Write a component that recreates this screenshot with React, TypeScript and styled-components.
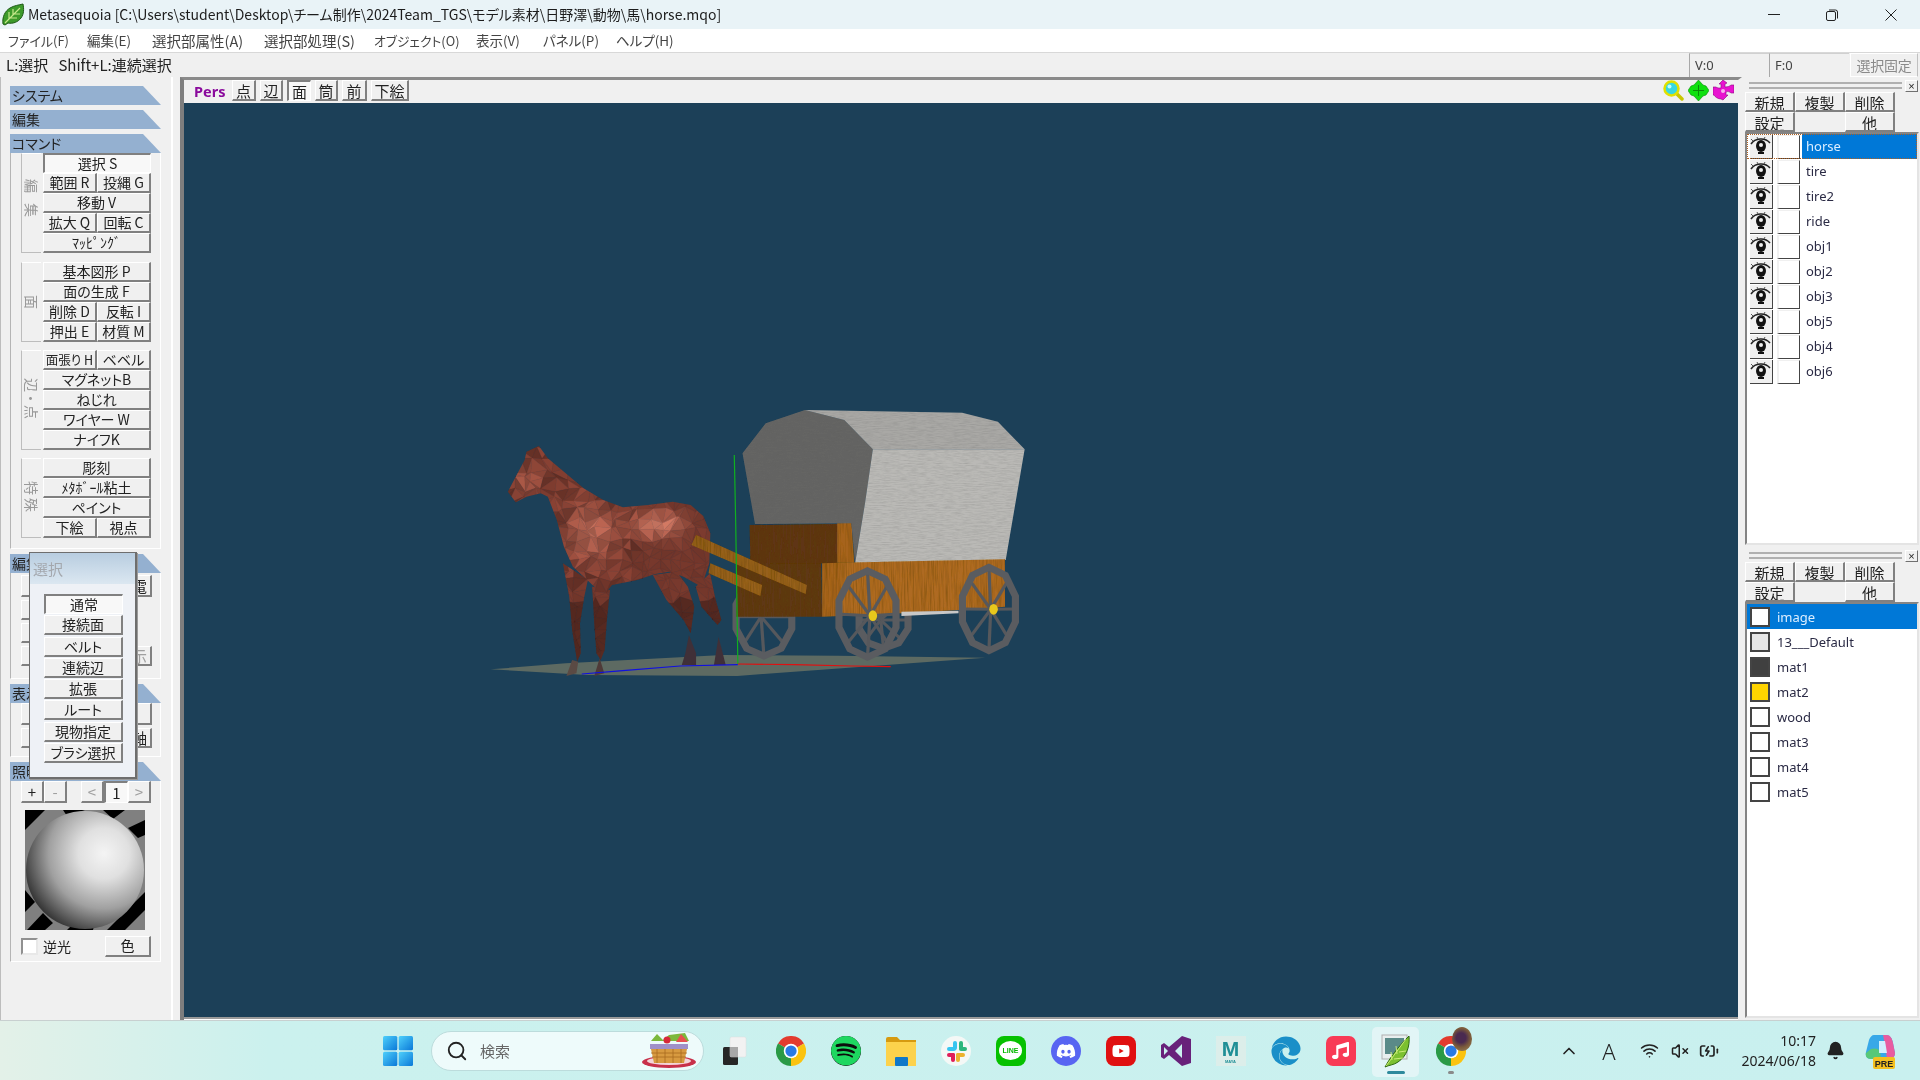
import React from "react";
import styled, { createGlobalStyle } from "styled-components";
import { Search, ChevronUp, Wifi, VolumeX, BatteryCharging, Bell } from "lucide-react";
import { FaSpotify, FaDiscord, FaYoutube, FaMusic, FaEdge } from "react-icons/fa";

const UI = `"Noto Sans CJK JP", "Noto Sans", sans-serif`;

const Global = createGlobalStyle`
  html, body { margin: 0; padding: 0; overflow: hidden; background: #f0f0f0; }
  * { box-sizing: border-box; font-feature-settings: "palt" !important; }
  body { font-family: ${UI}; }
`;

const Screen = styled.div`
  width: 1920px; height: 1080px; display: flex; flex-direction: column; overflow: hidden;
  color: #222; font-size: 14px; filter: blur(0.35px);
`;

/* ---------- title / menu / status ---------- */
const TitleBar = styled.div`
  height: 29px; background: #e9f3f7; display: flex; align-items: center; padding-left: 2px;
  flex: none;
`;
const TitleText = styled.div`
  margin-left: 3px; font: 14px/29px ${UI}; color: #1c1c1c; white-space: nowrap; flex: 1;
`;
const CaptionButton = styled.div`
  width: 58.5px; height: 29px; display: flex; align-items: center; justify-content: center;
`;
const MenuBar = styled.div`
  height: 23px; background: #fff; display: flex; align-items: center; flex: none; padding-left: 8px;
`;
const MenuItem = styled.div<{ $w: number; $fs: number }>`
  width: ${(p) => p.$w}px; font: ${(p) => p.$fs}px/23px ${UI}; color: #444; white-space: nowrap;
`;
const StatusBar = styled.div`
  height: 25px; background: #f0f0f0; border-top: 1px solid #d8d8d8; display: flex; align-items: stretch;
  flex: none; padding-left: 6px;
`;
const StatusHint = styled.div`
  flex: 1; font: 15px/24px ${UI}; color: #222; white-space: pre;
`;
const StatusCell = styled.div`
  width: 80px; margin-right: 0; border-left: 1px solid #a8a8a8; border-top: 1px solid #d0d0d0;
  font: 13px/23px "Noto Sans", sans-serif; color: #444; padding-left: 5px;
`;
const FixButton = styled.div`
  width: 68px; margin: 0 2px 0 1px; border: 1px solid #fff; border-right-color: #c0c0c0;
  font: 14px/23px ${UI}; color: #8a8a8a; text-align: center; white-space: nowrap; letter-spacing: -0.2px;
`;

/* ---------- workspace ---------- */
const Workspace = styled.div`
  height: 943px; flex: none; display: flex; background: #f0f0f0;
`;
const LeftPanel = styled.div`
  width: 180px; flex: none; position: relative; padding: 9px 0 0 9px; border-left: 1px solid #bdbdbd;
  display: flex; flex-direction: column; gap: 5px;
`;
const Sash = styled.div`
  position: absolute; left: 170px; top: 0; bottom: 0; width: 2px; background: #fff;
`;
const SectionHeader = styled.div`
  width: 151px; height: 19px; flex: none; background: #94b0d0; font: 14px/19px ${UI}; color: #222; padding-left: 2px;
  clip-path: polygon(0 0, 133px 0, 100% 100%, 0 100%);
`;
const Section = styled.div`
  display: flex; flex-direction: column;
`;
const SectionFrame = styled.div<{ $h: number }>`
  width: 151px; height: ${(p) => p.$h}px; border-left: 1px solid #b4b4b4; border-right: 1px solid #fff;
  border-bottom: 1px solid #fff; padding-left: 10px; margin-left: 0; display: flex; flex-direction: column;
`;
const CommandGroup = styled.div<{ $mt?: number }>`
  display: flex; margin-top: ${(p) => p.$mt ?? 0}px;
`;
const GroupLabel = styled.div<{ $sp?: number }>`
  width: 20px; margin-right: 2px; border: 1px solid #bdbdbd; border-right: none; border-top-color: #fff;
  writing-mode: vertical-rl; text-orientation: sideways; display: flex; align-items: center; justify-content: center;
  color: #999; font: 14px/18px ${UI}; letter-spacing: ${(p) => p.$sp ?? 0}px;
`;
const ButtonStack = styled.div`
  width: 108px; display: flex; flex-direction: column;
`;
const ButtonRow = styled.div`
  display: flex; height: 20px;
`;
const CmdButton = styled.div<{ $on?: boolean; $tight?: boolean; $dim?: boolean }>`
  flex: 1; min-width: 0; height: 100%; background: ${(p) => (p.$on ? "#f8f8f8" : "#f0f0f0")};
  border: 1px solid #fff; border-right: 2px solid #808080; border-bottom: 2px solid #808080;
  ${(p) => p.$on && "border-color: #808080 #fff #fff #808080; border-width: 2px 1px 1px 2px;"}
  display: flex; align-items: center; justify-content: center; white-space: pre; overflow: hidden;
  font: ${(p) => (p.$tight ? 12.5 : 14)}px/17px ${UI}; color: ${(p) => (p.$dim ? "#a0a0a0" : "#222")};
`;
const Floating = styled.div`
  position: absolute; left: 28px; top: 475px; width: 108px; height: 227px; background: #eef1f6;
  border: 2px solid #6e6e6e; border-top-width: 1px; border-left-width: 1px; box-shadow: 1px 1px 0 #9a9a9a;
`;
const FloatTitle = styled.div`
  height: 31px; background: linear-gradient(#b8cde0, #dbe7f1); color: #a4a8ae; font: 15px/31px ${UI}; padding-left: 3px;
`;
const FloatBody = styled.div`
  padding: 10px 13px 0 14px; display: flex; flex-direction: column; gap: 1.3px;
`;
const FloatButton = styled(CmdButton)`
  flex: none; height: 20px; width: 79px;
`;
const OddRow = styled.div<{ $h: number; $mt?: number }>`
  display: flex; height: ${(p) => p.$h}px; margin-top: ${(p) => p.$mt ?? 0}px; justify-content: space-between; padding-right: 8px;
`;
const SmallBtn = styled(CmdButton) <{ $w: number }>`
  flex: none; width: ${(p) => p.$w}px; font-size: 15px;
`;
const LightNav = styled.div`
  display: flex; height: 22px; padding-left: 0;
`;
const Gap = styled.div<{ $w: number }>`
  width: ${(p) => p.$w}px; flex: none;
`;
const SphereWrap = styled.div`
  margin: 7px 0 0 4px; width: 120px; height: 120px;
`;
const LightFoot = styled.div`
  display: flex; align-items: center; height: 22px; margin-top: 5px; font: 14px/20px ${UI};
`;
const CheckBox = styled.div`
  width: 17px; height: 17px; background: #fff; border: 2px solid; border-color: #909090 #e8e8e8 #e8e8e8 #909090; margin-right: 5px;
`;
const ColorBtn = styled(CmdButton)`
  flex: none; width: 46px; margin-left: auto; margin-right: 9px; height: 21px;
`;

/* ---------- view ---------- */
const ViewColumn = styled.div`
  width: 1562px; flex: none; display: flex; flex-direction: column; border-left: 4px solid #7e7e7e;
  border-top: 3px solid #8a8a8a; border-right: 4px solid #f0f0f0;
`;
const ViewToolbar = styled.div`
  height: 23px; flex: none; display: flex; align-items: flex-start; background: #f0f0f0; padding-left: 10px; 
`;
const PersLabel = styled.div`
  font: bold 14.5px/23px "Noto Sans", sans-serif; color: #8a0a9c; width: 38px; margin-right: 0;
`;
const ViewBtn = styled(CmdButton) <{ $w: number }>`
  flex: none; width: ${(p) => p.$w}px; height: 21px; margin-right: 4px; font-size: 15px;
`;
const ViewIcons = styled.div`
  margin-left: auto; display: flex; gap: 4px; padding-right: 4px; align-items: center; height: 21px;
`;
const Canvas = styled.div`
  flex: 1; min-height: 0; background: #1c4058;
`;
const SceneSvg = styled.svg`
  display: block; width: 100%; height: 100%;
`;
const ViewBottom = styled.div`
  height: 3px; flex: none; background: #9a9a9a; border-bottom: 1px solid #fff;
`;

/* ---------- right ---------- */
const RightColumn = styled.div`
  flex: 1; display: flex; flex-direction: column; padding-left: 3px;
`;
const Dock = styled.div<{ $h: number }>`
  height: ${(p) => p.$h}px; flex: none; display: flex; flex-direction: column; padding-bottom: 2px;
`;
const GripRow = styled.div`
  height: 15px; flex: none; display: flex; align-items: flex-start; padding: 3px 2px 0 4px; gap: 3px;
`;
const GripLines = styled.div`
  flex: 1; height: 7px; margin-top: 2px; border-top: 2px solid #b0b0b0; border-bottom: 2px solid #b0b0b0; 
`;
const GripClose = styled.div`
  width: 13px; height: 12px; border: 1px solid; border-color: #fff #707070 #707070 #fff; font: 11px/10px "Liberation Sans", sans-serif; text-align: center; color: #222;
`;
const DockButtons = styled.div`
  width: 151px; display: grid; grid-template-columns: repeat(3, 50px); grid-auto-rows: 20px; flex: none;
`;
const DockBtn = styled(CmdButton) <{ $blank?: boolean }>`
  ${(p) => p.$blank && "visibility: hidden;"}
  font-size: 15px; align-items: flex-start; padding-top: 1px;
`;
const ListBox = styled.div`
  flex: 1; min-height: 0; margin-right: 1px; background: #fff; border: 2px solid; border-color: #848484 #e4e4e4 #e4e4e4 #848484;
`;
const ObjRow = styled.div<{ $sel?: boolean }>`
  height: 25px; display: flex; align-items: center; padding-left: 3px; 
  ${(p) => p.$sel && "outline: 1px dotted #b06020; outline-offset: -1px;"}
`;
const EyeCell = styled.div`
  width: 23px; height: 24px; background: #f0f0f0; border-right: 1px solid #444; border-bottom: 1px solid #444; margin-right: 4px;
`;
const VisCell = styled.div`
  width: 23px; height: 24px; background: #fff; border-left: 2px solid #f0f0f0; border-top: 1px solid #f0f0f0; border-right: 1px solid #444; border-bottom: 1px solid #444;
`;
const ObjName = styled.div<{ $sel?: boolean }>`
  flex: 1; height: 25px; margin-left: 2px; padding-left: 4px; font: 13px/24px "Noto Sans", sans-serif;
  background: ${(p) => (p.$sel ? "#0078d7" : "transparent")}; color: ${(p) => (p.$sel ? "#dceeff" : "#2a2a44")};
`;
const MatRow = styled.div<{ $sel?: boolean }>`
  height: 25px; display: flex; align-items: center; padding-left: 3px; background: ${(p) => (p.$sel ? "#0078d7" : "transparent")};
  color: ${(p) => (p.$sel ? "#dceeff" : "#2a2a44")}; font: 13px/24px "Noto Sans", sans-serif;
`;
const Swatch = styled.div<{ $c: string }>`
  width: 20px; height: 20px; background: ${(p) => p.$c}; border: 2px solid #444; margin-right: 7px;
`;

/* ---------- taskbar ---------- */
const Taskbar = styled.div`
  height: 60px; flex: none; display: flex; align-items: center; border-top: 1px solid #c8d0d0;
  background: linear-gradient(90deg, #e3f1e8 0%, #cbf1ee 14%, #c9f0ef 100%);
`;
const StartCell = styled.div`
  margin-left: 383px; width: 30px; height: 30px;
`;
const SearchPill = styled.div`
  margin-left: 18px; margin-right: 4px; width: 273px; height: 40px; border-radius: 20px; background: #eefbfb; border: 1px solid #bcdcdc;
  display: flex; align-items: center; padding: 0 6px 0 14px; font: 15px ${UI}; color: #666; flex: none;
`;
const SearchLabel = styled.span`
  margin-left: 12px; flex: 1;
`;
const AppCell = styled.div<{ $active?: boolean }>`
  width: 55px; height: 56px; flex: none; display: flex; align-items: center; justify-content: center; position: relative;
  color: #fff;
  ${(p) => p.$active && `
    &::before { content: ""; position: absolute; left: 4px; right: 4px; top: 4px; bottom: 2px; background: #e2f5f6; border-radius: 5px; }
    & > * { position: relative; }
  `}
`;
const ActiveDot = styled.div<{ $wide?: boolean }>`
  position: absolute !important; bottom: 5px; left: 50%; transform: translateX(-50%); height: 3px; border-radius: 2px;
  width: ${(p) => (p.$wide ? 18 : 6)}px; background: ${(p) => (p.$wide ? "#2d8a9c" : "#8a8a8a")};
`;
const ProfileBadge = styled.div`
  position: absolute; top: 4px; right: 6px; width: 20px; height: 24px; border-radius: 50%;
  background: radial-gradient(circle at 45% 45%, #4a2a50 0 28%, #7a5a3a 55%, #a08a60 100%);
`;
const AppTile = styled.div<{ $bg: string; $r: string }>`
  width: 30px; height: 30px; background: ${(p) => p.$bg}; border-radius: ${(p) => p.$r};
  display: flex; align-items: center; justify-content: center; color: #fff; overflow: hidden;
`;
const SpotifyTile = styled(AppTile)`
  color: #1ed760;
`;
const LineText = styled.div`
  font: bold 7px/8px "Liberation Sans", sans-serif; color: #04b900; letter-spacing: 0;
`;
const LineBubble = styled.div`
  width: 23px; height: 19px; background: #fff; border-radius: 50%; display: flex; align-items: center; justify-content: center;
`;
const Tray = styled.div`
  margin-left: auto; display: flex; align-items: center; padding-right: 14px; color: #222;
`;
const TrayCell = styled.div<{ $w: number }>`
  width: ${(p) => p.$w}px; flex: none; display: flex; align-items: center; justify-content: center;
`;
const TrayA = styled.div`
  font: 300 22px/24px "Noto Sans", sans-serif; color: #222;
`;
const Clock = styled.div`
  width: 89px; flex: none; text-align: right; font: 14px/20px "Noto Sans", sans-serif; color: #222;
`;
const MayaTile = styled.div`
  width: 30px; height: 30px; background: #dceeea; display: flex; flex-direction: column; align-items: center; justify-content: center;
  font: bold 21px/21px "Liberation Sans", sans-serif; color: #1f8f96;
`;
const MayaSub = styled.div`
  font: bold 4px/5px "Liberation Sans", sans-serif; color: #1f8f96;
`;

/* ---------- drawings ---------- */
const Leaf = () => (
  <svg width="23" height="23" viewBox="0 0 23 23">
    <path d="M1 21C0 14 3 8 8 5c4-2.5 9-3 13-4 1 5 1 10-2 14-3 4-8 6-13 5l-3 2z" fill="#3d9a2a" stroke="#1e5a16" strokeWidth="1" />
    <path d="M3 20L18 5M7 16V9M11 12V6M8 15h7M12 11h6" stroke="#c5e88a" strokeWidth="1.2" fill="none" />
  </svg>
);

const Eye = () => (
  <svg width="22" height="23" viewBox="0 0 22 23">
    <path d="M1 9C5 3 15 2 20 8" stroke="#222" strokeWidth="1.6" fill="none" />
    <path d="M3 6L1 4M8 4L7 2M14 4l1-2" stroke="#555" strokeWidth="1" />
    <ellipse cx="11" cy="11" rx="5" ry="6" fill="#111" />
    <circle cx="11" cy="10" r="2" fill="#eee" />
    <path d="M8 17h6v2H8z" fill="#111" />
  </svg>
);

const Magnifier = () => (
  <svg width="21" height="21" viewBox="0 0 21 21">
    <path d="M13 13l6 6" stroke="#c8c800" strokeWidth="3.5" strokeLinecap="round" />
    <circle cx="8.5" cy="8.5" r="7" fill="#38d8e0" stroke="#e0e000" strokeWidth="2.5" />
    <circle cx="6.5" cy="6.5" r="2" fill="#bff" />
  </svg>
);
const MoveIcon = () => (
  <svg width="21" height="21" viewBox="0 0 21 21">
    <path d="M10.5 0L15 5l3 1 3 4.500L18 15l-3 1-4.500 5L6 16l-3-1-3-4.500L3 6l3-1z" fill="#10e010" stroke="#0a8a0a" strokeWidth="0.6" />
    <path d="M10.500 5v11M5 10.500h11" stroke="#0a8a0a" strokeWidth="1" />
  </svg>
);
const RotateIcon = () => (
  <svg width="21" height="21" viewBox="0 0 21 21">
    <path d="M10 0l4 3-2 1v3c3 0 5-1 6-2h3v8h-3c-1-1-3-2-5-1v3h2l-5 5-2-1c-3 0-6-2-7-4H0V7h3c1 1 3 1 5 1V4H6z" fill="#e814d0" stroke="#8a0a80" strokeWidth="0.6" />
    <circle cx="10" cy="11" r="2" fill="#f8b0f0" />
  </svg>
);

const LightSphere = () => (
  <svg width="120" height="120" viewBox="0 0 120 120">
    <defs>
      <radialGradient id="sph" cx="0.66" cy="0.36" r="0.72">
        <stop offset="0" stopColor="#f4f4f4" />
        <stop offset="0.3" stopColor="#e0e0e0" />
        <stop offset="0.65" stopColor="#a0a0a0" />
        <stop offset="0.9" stopColor="#505050" />
        <stop offset="1" stopColor="#303030" />
      </radialGradient>
    </defs>
    <rect width="120" height="120" fill="#808080" />
    <path d="M0 0H20L0 20zM38 0H60L42 6zM78 0H100L88 9zM120 10V25L113 28 103 18zM0 80L10 92 0 102zM2 120L18 103 28 113 20 120zM82 120L120 82V100L100 120zM42 120L50 112H70L68 120z" fill="#000" />
    <circle cx="60" cy="60" r="59" fill="url(#sph)" />
  </svg>
);

const WinLogo = () => (
  <svg width="30" height="30" viewBox="0 0 30 30">
    <defs>
      <linearGradient id="win" x1="0" y1="0" x2="1" y2="1">
        <stop offset="0" stopColor="#4fd0fb" />
        <stop offset="1" stopColor="#0a78d8" />
      </linearGradient>
    </defs>
    <rect x="0" y="0" width="14.300" height="14.300" rx="1.500" fill="url(#win)" />
    <rect x="15.700" y="0" width="14.300" height="14.300" rx="1.500" fill="url(#win)" />
    <rect x="0" y="15.700" width="14.300" height="14.300" rx="1.500" fill="url(#win)" />
    <rect x="15.700" y="15.700" width="14.300" height="14.300" rx="1.500" fill="url(#win)" />
  </svg>
);

const Basket = () => (
  <svg width="58" height="36" viewBox="0 0 58 36">
    <ellipse cx="30" cy="29" rx="27" ry="6" fill="#c8304a" />
    <ellipse cx="30" cy="28" rx="22" ry="4" fill="#f4d4d8" />
    <path d="M12 8l6-7 6 6 6-5 8-1 8-1 4 8z" fill="#7cb83c" />
    <path d="M42 1l7 8H37z" fill="#e85050" />
    <circle cx="28" cy="7" r="3.500" fill="#d82838" />
    <rect x="11" y="11" width="38" height="5" fill="#a090c8" />
    <path d="M12 16h36l-3 14H15z" fill="#d89a40" />
    <path d="M12 20h36M13 24h34M18 16v14M26 16v14M34 16v14M42 16v14" stroke="#a86a20" strokeWidth="0.8" />
  </svg>
);

const TaskView = () => (
  <svg width="30" height="30" viewBox="0 0 30 30">
    <rect x="2" y="11" width="15" height="18" rx="1.500" fill="#262626" />
    <rect x="9" y="1" width="16" height="20" rx="1.500" fill="#f2f2f2" stroke="#dcdcdc" strokeWidth="0.5" />
    <rect x="9" y="11" width="8" height="10" fill="#a8a8a8" />
  </svg>
);

const Chrome = ({ size = 30 }: { size?: number }) => (
  <svg width={size} height={size} viewBox="0 0 24 24">
    <path d="M12 12L1.600 6A12 12 0 0 1 22.400 6z" fill="#e33b2e" />
    <path d="M12 12L1.600 6A12 12 0 0 0 12 24z" fill="#2a9a46" />
    <path d="M12 12L22.400 6A12 12 0 0 1 12 24z" fill="#fbc30f" />
    <circle cx="12" cy="12" r="5.800" fill="#fff" />
    <circle cx="12" cy="12" r="4.500" fill="#2a7ae4" />
  </svg>
);

const Folder = () => (
  <svg width="30" height="30" viewBox="0 0 30 30">
    <path d="M0 3a2 2 0 0 1 2-2h9l3 3h16v4H0z" fill="#d69a10" />
    <rect x="0" y="6" width="30" height="24" fill="#fcd24c" />
    <rect x="9" y="21" width="13" height="9" rx="1" fill="#1078c8" />
  </svg>
);

const Slack = () => (
  <svg width="30" height="30" viewBox="0 0 30 30">
    <circle cx="15" cy="15" r="15" fill="#f4f8f6" />
    <rect x="12" y="5" width="4" height="9" rx="2" fill="#36c5f0" />
    <rect x="6" y="11" width="9" height="4" rx="2" fill="#36c5f0" />
    <rect x="18" y="5" width="4" height="9" rx="2" fill="#2eb67d" />
    <rect x="18" y="11" width="8" height="4" rx="2" fill="#2eb67d" />
    <rect x="15" y="17" width="9" height="4" rx="2" fill="#ecb22e" />
    <rect x="15" y="17" width="4" height="9" rx="2" fill="#ecb22e" />
    <rect x="6" y="17" width="8" height="4" rx="2" fill="#e01e5a" />
    <rect x="10" y="17" width="4" height="9" rx="2" fill="#e01e5a" />
  </svg>
);

const VisualStudio = () => (
  <svg width="30" height="30" viewBox="0 0 30 30">
    <path d="M21 0l9 3v24l-9 3L8 19l-5 4-3-2V9l3-2 5 4zM21 8l-7 7 7 7zM3 11v8l4-4z" fill="#68217a" />
  </svg>
);

const MetaseqApp = () => (
  <svg width="32" height="34" viewBox="0 0 32 34">
    <rect x="2" y="1" width="25" height="24" fill="#e8eeee" stroke="#b0b0b0" />
    <rect x="5" y="4" width="19" height="16" fill="#5a8a88" />
    <path d="M5 33C10 24 17 14 29 2c1 10-2 20-11 26-4 3-9 3-13 5z" fill="#7cc030" stroke="#2e6a10" strokeWidth="1" />
    <path d="M6 32L26 5M12 26l-1-8M17 20l-1-8M14 25l9-1M19 18l7-1" stroke="#d4f080" strokeWidth="0.9" fill="none" />
  </svg>
);

const Copilot = () => (
  <svg width="30" height="36" viewBox="0 0 30 36">
    <path d="M9 2h12c4 0 6 3 7 8l2 10c0 4-3 6-6 6h-8L6 26c-4 0-6-3-5-7L4 7c1-3 3-5 5-5z" fill="#38a8e8" />
    <path d="M18 2h4c3 0 5 3 6 8l2 10c0 4-3 6-6 6h-2l-2-14z" fill="#e85ca0" />
    <path d="M6 16c3-1 7-1 9 2l1 8H6c-4 0-6-3-5-6z" fill="#58c878" />
    <path d="M14 8h6l2 12h-8z" fill="#d0f0ff" />
    <rect x="8" y="24" width="22" height="12" rx="2" fill="#f4c020" />
    <text x="19" y="33.500" textAnchor="middle" fontFamily="Liberation Sans, sans-serif" fontWeight="bold" fontSize="9" fill="#222">PRE</text>
  </svg>
);

/* procedural facets for the low-poly horse */
const rnd = (seed: number) => {
  const x = Math.sin(seed * 127.1 + 311.7) * 43758.5453;
  return x - Math.floor(x);
};
const horseMesh = (() => {
  const step = 30;
  const cols = 23;
  const rows = 25;
  const ox = 60;
  const oy = 150;
  const vx = (i: number, j: number) => ox + i * step + (rnd(i * 31 + j * 7) - 0.5) * 22;
  const vy = (i: number, j: number) => oy + j * step + (rnd(i * 13 + j * 59 + 5) - 0.5) * 22;
  const tone = (x: number, y: number, s: number) => {
    const lit =
      1.1 * Math.exp(-(((x - 500) / 70) ** 2 + ((y - 405) / 40) ** 2)) +
      0.8 * Math.exp(-(((x - 310) / 70) ** 2 + ((y - 430) / 85) ** 2)) +
      0.45 * Math.exp(-(((x - 130) / 45) ** 2 + ((y - 270) / 50) ** 2));
    const upper = x < 440 && y < 600;
    const speck = (rnd(s) - 0.5) * (upper ? 0.42 : 0.1 + 0.25 * Math.min(1, lit));
    const dark = y > 640 ? 0.74 : 1;
    const k = Math.max(0.5, 0.98 + 0.72 * lit + speck) * dark;
    const r = Math.min(235, Math.round(118 * k));
    const g = Math.min(165, Math.round(56 * k * (1 + lit * 0.22)));
    const b = Math.min(145, Math.round(44 * k * (1 + lit * 0.28)));
    return `rgb(${r},${g},${b})`;
  };
  const out: React.ReactNode[] = [];
  for (let i = 0; i < cols; i++) {
    for (let j = 0; j < rows; j++) {
      const a = [vx(i, j), vy(i, j)];
      const b = [vx(i + 1, j), vy(i + 1, j)];
      const c = [vx(i + 1, j + 1), vy(i + 1, j + 1)];
      const d = [vx(i, j + 1), vy(i, j + 1)];
      const flip = rnd(i * 3 + j * 17) > 0.5;
      const t1 = flip ? [a, b, c] : [a, b, d];
      const t2 = flip ? [a, c, d] : [b, c, d];
      [t1, t2].forEach((t, n) => {
        const mx = (t[0][0] + t[1][0] + t[2][0]) / 3;
        const my = (t[0][1] + t[1][1] + t[2][1]) / 3;
        const fill = tone(mx, my, i * 101 + j * 11 + n);
        out.push(
          <polygon key={`${i}-${j}-${n}`} points={t.map((p) => p.join(",")).join(" ")} fill={fill} stroke={fill} strokeWidth="1" />
        );
      });
    }
  }
  return out;
})();

const Wheel = ({ cx, cy, rx, ry, hub }: { cx: number; cy: number; rx: number; ry: number; hub?: [number, number] }) => {
  const n = 10;
  const pts: string[] = [];
  const spokes: React.ReactNode[] = [];
  const hx = hub ? hub[0] : cx;
  const hy = hub ? hub[1] : cy;
  for (let i = 0; i < n; i++) {
    const a = ((i + 0.5) / n) * Math.PI * 2;
    pts.push(`${cx + rx * Math.cos(a)},${cy + ry * Math.sin(a)}`);
  }
  for (let i = 0; i < 8; i++) {
    const a = (i / 8) * Math.PI * 2;
    spokes.push(
      <line key={i} x1={hx - 8} y1={hy} x2={cx + rx * Math.cos(a)} y2={cy + ry * Math.sin(a)} stroke="#56585c" strokeWidth="9" />
    );
  }
  return (
    <g>
      {spokes}
      <polygon points={pts.join(" ")} fill="none" stroke="#5a5c60" strokeWidth="20" />
      {hub && <ellipse cx={hx} cy={hy} rx="12" ry="16" fill="#e8c81c" />}
    </g>
  );
};

const Scene = () => (
  <SceneSvg viewBox="0 0 1554 914">
    <defs>
      <filter id="cloth" x="0" y="0" width="100%" height="100%">
        <feTurbulence type="fractalNoise" baseFrequency="0.04 0.35" numOctaves="3" seed="4" result="n" />
        <feColorMatrix in="n" type="matrix" values="0 0 0 0 0.15  0 0 0 0 0.15  0 0 0 0 0.15  0.55 0 0 0 -0.2" result="d" />
        <feComposite in="d" in2="SourceGraphic" operator="in" result="m" />
        <feMerge>
          <feMergeNode in="SourceGraphic" />
          <feMergeNode in="m" />
        </feMerge>
      </filter>
      <filter id="wood" x="0" y="0" width="100%" height="100%">
        <feTurbulence type="fractalNoise" baseFrequency="0.25 0.012" numOctaves="3" seed="7" result="n" />
        <feColorMatrix in="n" type="matrix" values="0 0 0 0 0.1  0 0 0 0 0.05  0 0 0 0 0  1 0 0 0 -0.38" result="d" />
        <feComposite in="d" in2="SourceGraphic" operator="in" result="m" />
        <feMerge>
          <feMergeNode in="SourceGraphic" />
          <feMergeNode in="m" />
        </feMerge>
      </filter>
      <clipPath id="horseShape">
        <polygon points="130,185 165,168 190,205 240,250 290,295 345,330 400,352 470,345 540,335 590,345 625,378 645,430 642,520 620,590 570,560 530,545 490,552 440,570 370,585 350,610 330,600 300,570 260,530 235,470 215,390 190,320 170,310 130,320 100,337 78,305 100,260 125,210" />
        <polygon points="232,520 302,570 292,620 280,700 282,790 272,815 258,720 250,620" />
        <polygon points="314,590 364,600 356,680 349,780 338,810 326,790 320,700" />
        <polygon points="484,555 550,545 582,590 600,650 590,730 570,690 522,630" />
        <polygon points="604,590 644,550 660,630 676,690 665,705 620,650" />
      </clipPath>
    </defs>
    <g transform="translate(296 287) scale(0.35714 0.33333)">
      {/* ground */}
      <polygon points="30,838 240,820 680,795 1000,797 1415,803 720,858 300,855" fill="#5d6a62" />
      {/* back wheels */}
      <Wheel cx={795} cy={680} rx={82} ry={118} />
      <Wheel cx={1130} cy={690} rx={72} ry={85} />
      {/* wagon */}
      <polygon points="718,520 955,518 958,680 718,680" fill="#5e3818" filter="url(#wood)" />
      <polygon points="755,405 1000,402 1000,520 757,522" fill="#5f3614" filter="url(#wood)" />
      <polygon points="1000,400 1040,398 1048,518 1000,518" fill="#a6641c" filter="url(#wood)" />
      <polygon points="735,190 800,100 910,60 1020,90 1100,178 1078,340 1050,520 1040,400 770,402" fill="#646462" filter="url(#cloth)" />
      <polygon points="910,60 1350,68 1450,95 1525,178 1100,178 1020,90" fill="#a9a8a5" filter="url(#cloth)" />
      <polygon points="1100,178 1525,178 1472,510 1050,522 1078,340" fill="#bab9b6" filter="url(#cloth)" />
      <polygon points="1005,518 1470,508 1470,650 1340,660 1180,670 1005,678" fill="#ae6a20" filter="url(#wood)" />
      <polygon points="958,520 1008,518 1008,678 958,680" fill="#a6641c" filter="url(#wood)" />
      <polygon points="1180,665 1340,662 1340,670 1180,678" fill="#c8c8c8" />
      {/* shafts */}
      <polygon points="640,550 645,520 790,585 785,618" fill="#96601c" filter="url(#wood)" />
      {/* horse */}
      <g clipPath="url(#horseShape)">{horseMesh}</g>
      <polygon points="258,810 275,815 270,850 242,858" fill="#5a4a44" />
      <polygon points="335,805 348,850 320,858" fill="#4e3a38" />
      <polygon points="585,735 605,790 605,825 565,825 575,790" fill="#403038" />
      <polygon points="668,740 688,825 655,825" fill="#403038" />
      <polygon points="592,465 605,435 915,585 912,612" fill="#96601c" filter="url(#wood)" />
      {/* front wheels */}
      <Wheel cx={1085} cy={672} rx={84} ry={130} hub={[1100, 677]} />
      <Wheel cx={1425} cy={657} rx={78} ry={125} hub={[1438, 658]} />
      {/* axes */}
      <polyline points="712,195 716,400 722,822" fill="none" stroke="#10b020" strokeWidth="1.200" vectorEffect="non-scaling-stroke" />
      <polyline points="722,822 880,824 1040,828 1150,830" fill="none" stroke="#e01010" strokeWidth="1.200" vectorEffect="non-scaling-stroke" />
      <polyline points="722,824 560,828 400,842 285,852" fill="none" stroke="#1010e0" strokeWidth="1.200" vectorEffect="non-scaling-stroke" />
    </g>
  </SceneSvg>
);

/* ---------- data ---------- */
const menus: [string, number, number][] = [
  ["ファイル(F)", 79, 13], ["編集(E)", 65, 13.5], ["選択部属性(A)", 112, 14.5], ["選択部処理(S)", 110, 14.5], ["オブジェクト(O)", 102, 12.8],
  ["表示(V)", 67, 13.5], ["パネル(P)", 73, 13.5], ["ヘルプ(H)", 80, 13.5],
];
const objects = ["horse", "tire", "tire2", "ride", "obj1", "obj2", "obj3", "obj5", "obj4", "obj6"];
const mats: [string, string][] = [
  ["image", "#ffffff"], ["13___Default", "#e6e6e6"], ["mat1", "#404040"], ["mat2", "#ffd400"],
  ["wood", "#ffffff"], ["mat3", "#ffffff"], ["mat4", "#ffffff"], ["mat5", "#ffffff"],
];
const palette = ["通常", "接続面", "ベルト", "連続辺", "拡張", "ルート", "現物指定", "ブラシ選択"];

const DockHead = () => (
  <>
    <GripRow>
      <GripLines />
      <GripClose>×</GripClose>
    </GripRow>
    <DockButtons>
      <DockBtn>新規</DockBtn>
      <DockBtn>複製</DockBtn>
      <DockBtn>削除</DockBtn>
      <DockBtn>設定</DockBtn>
      <DockBtn $blank />
      <DockBtn>他</DockBtn>
    </DockButtons>
  </>
);

export default function App() {
  return (
    <Screen>
      <Global />
      <TitleBar>
        <Leaf />
        <TitleText>Metasequoia [C:\Users\student\Desktop\チーム制作\2024Team_TGS\モデル素材\日野澤\動物\馬\horse.mqo]</TitleText>
        <CaptionButton>
          <svg width="12" height="2"><rect width="12" height="1" fill="#222" /></svg>
        </CaptionButton>
        <CaptionButton>
          <svg width="12" height="12" viewBox="0 0 12 12"><rect x="0.500" y="2.500" width="9" height="9" rx="1.500" fill="none" stroke="#222" /><path d="M3 1h6.500A2 2 0 0 1 11.500 3v6.500" fill="none" stroke="#222" /></svg>
        </CaptionButton>
        <CaptionButton>
          <svg width="12" height="12" viewBox="0 0 12 12"><path d="M0.500 0.500l11 11M11.500 0.500l-11 11" stroke="#222" /></svg>
        </CaptionButton>
      </TitleBar>
      <MenuBar>
        {menus.map(([t, w, fs]) => (
          <MenuItem key={t} $w={w} $fs={fs}>{t}</MenuItem>
        ))}
      </MenuBar>
      <StatusBar>
        <StatusHint>L:選択   Shift+L:連続選択</StatusHint>
        <StatusCell>V:0</StatusCell>
        <StatusCell>F:0</StatusCell>
        <FixButton>選択固定</FixButton>
      </StatusBar>
      <Workspace>
        <LeftPanel>
          <Sash />
          <SectionHeader>システム</SectionHeader>
          <SectionHeader>編集</SectionHeader>
          <Section>
            <SectionHeader>コマンド</SectionHeader>
            <SectionFrame $h={396}>
              <CommandGroup>
                <GroupLabel $sp={10}>編集</GroupLabel>
                <ButtonStack>
                  <ButtonRow><CmdButton $on>選択 S</CmdButton></ButtonRow>
                  <ButtonRow><CmdButton>範囲 R</CmdButton><CmdButton>投縄 G</CmdButton></ButtonRow>
                  <ButtonRow><CmdButton>移動 V</CmdButton></ButtonRow>
                  <ButtonRow><CmdButton>拡大 Q</CmdButton><CmdButton>回転 C</CmdButton></ButtonRow>
                  <ButtonRow><CmdButton>ﾏｯﾋﾟﾝｸﾞ</CmdButton></ButtonRow>
                </ButtonStack>
              </CommandGroup>
              <CommandGroup $mt={9}>
                <GroupLabel>面</GroupLabel>
                <ButtonStack>
                  <ButtonRow><CmdButton>基本図形 P</CmdButton></ButtonRow>
                  <ButtonRow><CmdButton>面の生成 F</CmdButton></ButtonRow>
                  <ButtonRow><CmdButton>削除 D</CmdButton><CmdButton>反転 I</CmdButton></ButtonRow>
                  <ButtonRow><CmdButton>押出 E</CmdButton><CmdButton>材質 M</CmdButton></ButtonRow>
                </ButtonStack>
              </CommandGroup>
              <CommandGroup $mt={8}>
                <GroupLabel $sp={3}>辺・点</GroupLabel>
                <ButtonStack>
                  <ButtonRow><CmdButton $tight>面張り H</CmdButton><CmdButton>ベベル</CmdButton></ButtonRow>
                  <ButtonRow><CmdButton>マグネットB</CmdButton></ButtonRow>
                  <ButtonRow><CmdButton>ねじれ</CmdButton></ButtonRow>
                  <ButtonRow><CmdButton>ワイヤー W</CmdButton></ButtonRow>
                  <ButtonRow><CmdButton>ナイフK</CmdButton></ButtonRow>
                </ButtonStack>
              </CommandGroup>
              <CommandGroup $mt={8}>
                <GroupLabel $sp={3}>特殊</GroupLabel>
                <ButtonStack>
                  <ButtonRow><CmdButton>彫刻</CmdButton></ButtonRow>
                  <ButtonRow><CmdButton>ﾒﾀﾎﾞｰﾙ粘土</CmdButton></ButtonRow>
                  <ButtonRow><CmdButton>ペイント</CmdButton></ButtonRow>
                  <ButtonRow><CmdButton>下絵</CmdButton><CmdButton>視点</CmdButton></ButtonRow>
                </ButtonStack>
              </CommandGroup>
            </SectionFrame>
          </Section>
          <Section>
            <SectionHeader>編集</SectionHeader>
            <SectionFrame $h={106}>
              <OddRow $h={22} $mt={2}>
                <SmallBtn $w={20}> </SmallBtn>
                <SmallBtn $w={24}>電</SmallBtn>
              </OddRow>
              <OddRow $h={20} $mt={3}>
                <SmallBtn $w={20}> </SmallBtn>
              </OddRow>
              <OddRow $h={20} $mt={3}>
                <SmallBtn $w={20}> </SmallBtn>
              </OddRow>
              <OddRow $h={20} $mt={3}>
                <SmallBtn $w={20}> </SmallBtn>
                <SmallBtn $w={24} $dim>示</SmallBtn>
              </OddRow>
            </SectionFrame>
          </Section>
          <Section>
            <SectionHeader>表示</SectionHeader>
            <SectionFrame $h={54}>
              <OddRow $h={22}>
                <SmallBtn $w={20}> </SmallBtn>
                <SmallBtn $w={24}> </SmallBtn>
              </OddRow>
              <OddRow $h={20} $mt={3}>
                <SmallBtn $w={20}> </SmallBtn>
                <SmallBtn $w={24}>軸</SmallBtn>
              </OddRow>
            </SectionFrame>
          </Section>
          <Section>
            <SectionHeader>照明</SectionHeader>
            <SectionFrame $h={181}>
              <LightNav>
                <SmallBtn $w={23}>+</SmallBtn>
                <SmallBtn $w={23} $dim>-</SmallBtn>
                <Gap $w={14} />
                <SmallBtn $w={23} $dim>&lt;</SmallBtn>
                <SmallBtn $w={24} $on>1</SmallBtn>
                <SmallBtn $w={23} $dim>&gt;</SmallBtn>
              </LightNav>
              <SphereWrap><LightSphere /></SphereWrap>
              <LightFoot>
                <CheckBox />
                逆光
                <ColorBtn>色</ColorBtn>
              </LightFoot>
            </SectionFrame>
          </Section>
          <Floating>
            <FloatTitle>選択</FloatTitle>
            <FloatBody>
              {palette.map((t, i) => (
                <FloatButton key={t} $on={i === 0}>{t}</FloatButton>
              ))}
            </FloatBody>
          </Floating>
        </LeftPanel>
        <ViewColumn>
          <ViewToolbar>
            <PersLabel>Pers</PersLabel>
            <ViewBtn $w={24}>点</ViewBtn>
            <ViewBtn $w={23}>辺</ViewBtn>
            <ViewBtn $w={24} $on>面</ViewBtn>
            <ViewBtn $w={23}>筒</ViewBtn>
            <ViewBtn $w={25}>前</ViewBtn>
            <ViewBtn $w={38}>下絵</ViewBtn>
            <ViewIcons>
              <Magnifier />
              <MoveIcon />
              <RotateIcon />
            </ViewIcons>
          </ViewToolbar>
          <Canvas><Scene /></Canvas>
          <ViewBottom />
        </ViewColumn>
        <RightColumn>
          <Dock $h={470}>
            <DockHead />
            <ListBox>
              {objects.map((o, i) => (
                <ObjRow key={o} $sel={i === 0}>
                  <EyeCell><Eye /></EyeCell>
                  <VisCell />
                  <ObjName $sel={i === 0}>{o}</ObjName>
                </ObjRow>
              ))}
            </ListBox>
          </Dock>
          <Dock $h={473}>
            <DockHead />
            <ListBox>
              {mats.map(([m, c], i) => (
                <MatRow key={m} $sel={i === 0}>
                  <Swatch $c={c} />
                  {m}
                </MatRow>
              ))}
            </ListBox>
          </Dock>
        </RightColumn>
      </Workspace>
      <Taskbar>
        <StartCell><WinLogo /></StartCell>
        <SearchPill>
          <Search size={22} color="#222" />
          <SearchLabel>検索</SearchLabel>
          <Basket />
        </SearchPill>
        <AppCell><TaskView /></AppCell>
        <AppCell><Chrome /></AppCell>
        <AppCell><SpotifyTile $bg="#0c0c0c" $r="50%"><FaSpotify size={31} /></SpotifyTile></AppCell>
        <AppCell><Folder /></AppCell>
        <AppCell><Slack /></AppCell>
        <AppCell><AppTile $bg="#06c100" $r="8px"><LineBubble><LineText>LINE</LineText></LineBubble></AppTile></AppCell>
        <AppCell><AppTile $bg="#5865f2" $r="50%"><FaDiscord size={20} /></AppTile></AppCell>
        <AppCell><AppTile $bg="#e01010" $r="8px"><FaYoutube size={18} color="#fff" /></AppTile></AppCell>
        <AppCell><VisualStudio /></AppCell>
        <AppCell><MayaTile>M<MayaSub>MAYA</MayaSub></MayaTile></AppCell>
        <AppCell><FaEdge size={30} color="#1a8fc8" /></AppCell>
        <AppCell><AppTile $bg="#f83a55" $r="7px"><FaMusic size={17} /></AppTile></AppCell>
        <AppCell $active><MetaseqApp /><ActiveDot $wide /></AppCell>
        <AppCell><Chrome /><ProfileBadge /><ActiveDot /></AppCell>
        <Tray>
          <TrayCell $w={40}><ChevronUp size={20} /></TrayCell>
          <TrayCell $w={40}><TrayA>A</TrayA></TrayCell>
          <TrayCell $w={40}><Wifi size={19} /></TrayCell>
          <TrayCell $w={22}><VolumeX size={18} /></TrayCell>
          <TrayCell $w={36}><BatteryCharging size={20} /></TrayCell>
          <Clock>10:17<br />2024/06/18</Clock>
          <TrayCell $w={38}><Bell size={19} fill="#222" /></TrayCell>
          <TrayCell $w={52}><Copilot /></TrayCell>
        </Tray>
      </Taskbar>
    </Screen>
  );
}
